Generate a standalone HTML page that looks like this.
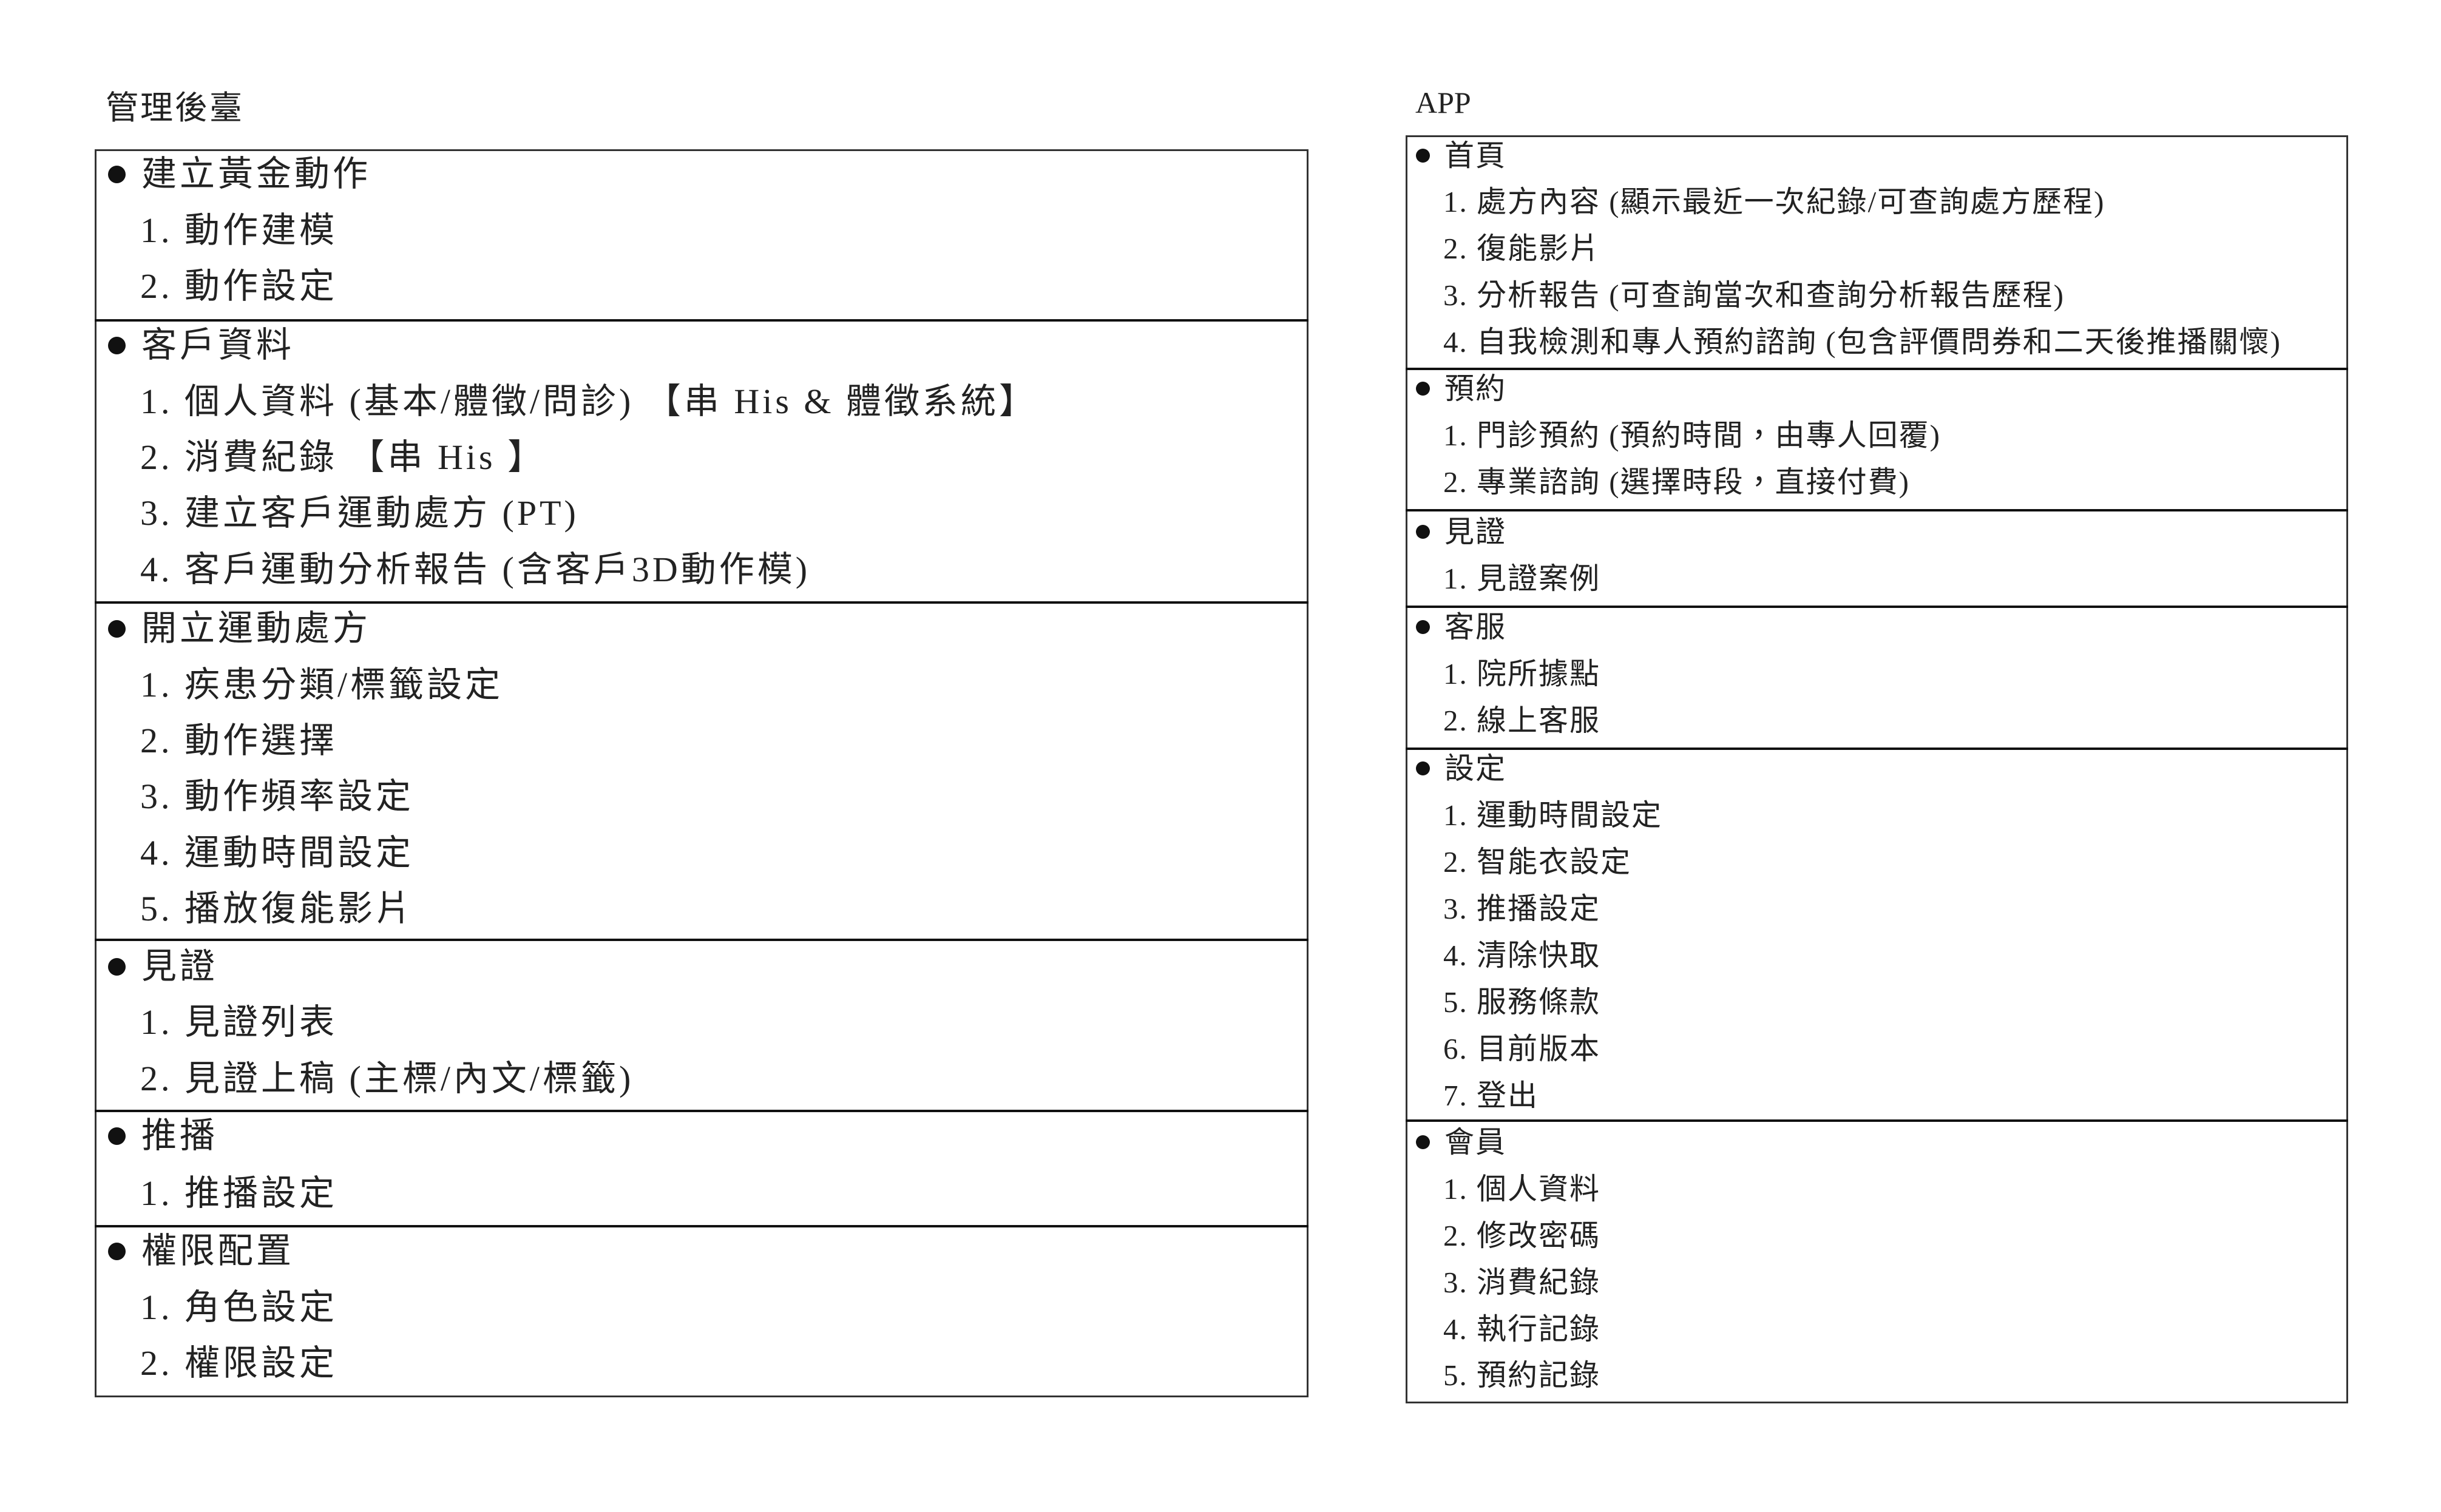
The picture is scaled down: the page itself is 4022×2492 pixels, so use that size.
<!DOCTYPE html>
<html><head><meta charset="utf-8">
<style>
html,body{margin:0;padding:0;background:#fff;}
body{width:4022px;height:2492px;position:relative;overflow:hidden;font-family:"Liberation Serif","Noto Sans CJK TC",serif;color:#222;}
.t{position:absolute;white-space:nowrap;}
.L{font-size:58px;line-height:60px;letter-spacing:5px;}
.R{font-size:49px;line-height:52px;letter-spacing:2px;}
.box{position:absolute;border:3px solid #333;box-sizing:border-box;}
.hr{position:absolute;height:4px;background:#111;}
.b{position:absolute;border-radius:50%;background:#111;}
</style></head><body>
<div class="t" style="left:174px;top:148px;font-size:54px;line-height:60px;letter-spacing:3px;">管理後臺</div>
<div class="t" style="left:2332px;top:143px;font-size:50px;line-height:52px;">APP</div>

<div class="box" style="left:156px;top:246px;width:2000px;height:2057px;"></div>
<div class="hr" style="left:156px;width:2000px;top:526px;"></div>
<div class="hr" style="left:156px;width:2000px;top:991px;"></div>
<div class="hr" style="left:156px;width:2000px;top:1547px;"></div>
<div class="hr" style="left:156px;width:2000px;top:1829px;"></div>
<div class="hr" style="left:156px;width:2000px;top:2019px;"></div>

<div class="box" style="left:2316px;top:223px;width:1553px;height:2090px;"></div>
<div class="hr" style="left:2316px;width:1553px;top:606px;"></div>
<div class="hr" style="left:2316px;width:1553px;top:839px;"></div>
<div class="hr" style="left:2316px;width:1553px;top:998px;"></div>
<div class="hr" style="left:2316px;width:1553px;top:1232px;"></div>
<div class="hr" style="left:2316px;width:1553px;top:1845px;"></div>

<div class="b" style="left:178px;top:273px;width:29px;height:29px;"></div>
<div class="b" style="left:178px;top:555px;width:29px;height:29px;"></div>
<div class="b" style="left:178px;top:1022px;width:29px;height:29px;"></div>
<div class="b" style="left:178px;top:1579px;width:29px;height:29px;"></div>
<div class="b" style="left:178px;top:1858px;width:29px;height:29px;"></div>
<div class="b" style="left:178px;top:2048px;width:29px;height:29px;"></div>

<div class="t L" style="left:233px;top:257px;">建立黃金動作</div>
<div class="t L" style="left:231px;top:350px;">1. 動作建模</div>
<div class="t L" style="left:231px;top:442px;">2. 動作設定</div>
<div class="t L" style="left:233px;top:539px;">客戶資料</div>
<div class="t L" style="left:231px;top:632px;">1. 個人資料 (基本/體徵/問診) 【串 His &amp; 體徵系統】</div>
<div class="t L" style="left:231px;top:724px;">2. 消費紀錄 【串 His 】</div>
<div class="t L" style="left:231px;top:816px;">3. 建立客戶運動處方 (PT)</div>
<div class="t L" style="left:231px;top:909px;">4. 客戶運動分析報告 (含客戶3D動作模)</div>
<div class="t L" style="left:233px;top:1006px;">開立運動處方</div>
<div class="t L" style="left:231px;top:1099px;">1. 疾患分類/標籤設定</div>
<div class="t L" style="left:231px;top:1191px;">2. 動作選擇</div>
<div class="t L" style="left:231px;top:1283px;">3. 動作頻率設定</div>
<div class="t L" style="left:231px;top:1376px;">4. 運動時間設定</div>
<div class="t L" style="left:231px;top:1468px;">5. 播放復能影片</div>
<div class="t L" style="left:233px;top:1563px;">見證</div>
<div class="t L" style="left:231px;top:1655px;">1. 見證列表</div>
<div class="t L" style="left:231px;top:1748px;">2. 見證上稿 (主標/內文/標籤)</div>
<div class="t L" style="left:233px;top:1842px;">推播</div>
<div class="t L" style="left:231px;top:1937px;">1. 推播設定</div>
<div class="t L" style="left:233px;top:2032px;">權限配置</div>
<div class="t L" style="left:231px;top:2125px;">1. 角色設定</div>
<div class="t L" style="left:231px;top:2217px;">2. 權限設定</div>

<div class="b" style="left:2333px;top:245px;width:23px;height:23px;"></div>
<div class="b" style="left:2333px;top:629px;width:23px;height:23px;"></div>
<div class="b" style="left:2333px;top:865px;width:23px;height:23px;"></div>
<div class="b" style="left:2333px;top:1022px;width:23px;height:23px;"></div>
<div class="b" style="left:2333px;top:1255px;width:23px;height:23px;"></div>
<div class="b" style="left:2333px;top:1871px;width:23px;height:23px;"></div>

<div class="t R" style="left:2380px;top:231px;">首頁</div>
<div class="t R" style="left:2378px;top:307px;">1. 處方內容 (顯示最近一次紀錄/可查詢處方歷程)</div>
<div class="t R" style="left:2378px;top:384px;">2. 復能影片</div>
<div class="t R" style="left:2378px;top:461px;">3. 分析報告 (可查詢當次和查詢分析報告歷程)</div>
<div class="t R" style="left:2378px;top:538px;">4. 自我檢測和專人預約諮詢 (包含評價問券和二天後推播關懷)</div>
<div class="t R" style="left:2380px;top:615px;">預約</div>
<div class="t R" style="left:2378px;top:692px;">1. 門診預約 (預約時間，由專人回覆)</div>
<div class="t R" style="left:2378px;top:769px;">2. 專業諮詢 (選擇時段，直接付費)</div>
<div class="t R" style="left:2380px;top:851px;">見證</div>
<div class="t R" style="left:2378px;top:928px;">1. 見證案例</div>
<div class="t R" style="left:2380px;top:1008px;">客服</div>
<div class="t R" style="left:2378px;top:1085px;">1. 院所據點</div>
<div class="t R" style="left:2378px;top:1162px;">2. 線上客服</div>
<div class="t R" style="left:2380px;top:1241px;">設定</div>
<div class="t R" style="left:2378px;top:1318px;">1. 運動時間設定</div>
<div class="t R" style="left:2378px;top:1395px;">2. 智能衣設定</div>
<div class="t R" style="left:2378px;top:1472px;">3. 推播設定</div>
<div class="t R" style="left:2378px;top:1549px;">4. 清除快取</div>
<div class="t R" style="left:2378px;top:1626px;">5. 服務條款</div>
<div class="t R" style="left:2378px;top:1703px;">6. 目前版本</div>
<div class="t R" style="left:2378px;top:1780px;">7. 登出</div>
<div class="t R" style="left:2380px;top:1857px;">會員</div>
<div class="t R" style="left:2378px;top:1934px;">1. 個人資料</div>
<div class="t R" style="left:2378px;top:2011px;">2. 修改密碼</div>
<div class="t R" style="left:2378px;top:2088px;">3. 消費紀錄</div>
<div class="t R" style="left:2378px;top:2165px;">4. 執行記錄</div>
<div class="t R" style="left:2378px;top:2241px;">5. 預約記錄</div>
</body></html>
